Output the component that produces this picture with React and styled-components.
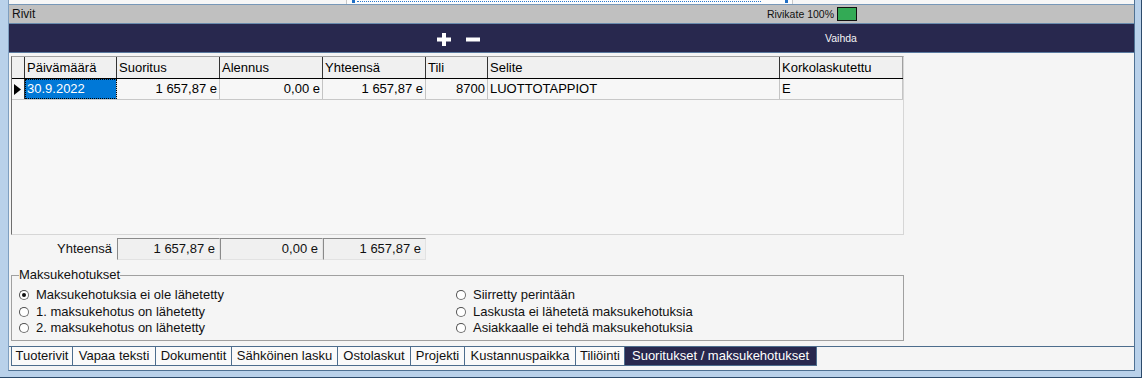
import React from 'react';
import styled, { createGlobalStyle } from 'styled-components';

const Global = createGlobalStyle`
  html, body { margin: 0; padding: 0; background: #b9d1ea; }
  body { font-family: "Liberation Sans", Arial, sans-serif; color: #000; }
  * { box-sizing: border-box; }
`;

const Frame = styled.div`
  width: 1142px;
  height: 378px;
  background: #b9d1ea;
  padding: 0 6px 6px 8px;
  border-right: 1px solid #2c4a6b;
  border-bottom: 1px solid #2c4a6b;
  display: flex;
`;

const Panel = styled.div`
  flex: 1;
  display: flex;
  flex-direction: column;
  background: #f5f5f5;
  border-left: 1px solid #7f9fc0;
  border-right: 1px solid #4f7193;
  border-bottom: 1px solid #4f7193;
`;

const TopStrip = styled.div`
  height: 5px;
  background: #f7f7f7;
  border-bottom: 1px solid #7898b8;
  padding-left: 337px;
`;

const ScrollBox = styled.div`
  width: 447px;
  height: 4px;
  background: #fdfdfd;
  border-left: 1px solid #c8c8c8;
  border-right: 1px solid #c8c8c8;
  display: flex;
  align-items: flex-start;
  padding: 0 4px 0 5px;
  gap: 2px;
`;

const Mark = styled.div`
  width: 3px;
  height: 3px;
  background: #1f6fc5;
  flex: none;
`;

const Dotted = styled.div`
  flex: 1;
  margin-top: 1px;
  border-top: 1px dotted #2a78cc;
  margin-right: 22px;
`;

const TitleBar = styled.div`
  height: 19px;
  background: #c0c0c0;
  border-bottom: 1px solid #6a8cae;
  display: flex;
  align-items: center;
  padding: 0 277px 0 3px;
  font-size: 12px;
`;

const Title = styled.span`
  color: #111;
`;

const Coverage = styled.div`
  margin-left: auto;
  display: flex;
  align-items: center;
  gap: 3px;
  font-size: 10.5px;
  color: #111;
`;

const Swatch = styled.div`
  width: 20px;
  height: 14px;
  background: #33aa55;
  border: 1px solid #111;
`;

const NavBar = styled.div`
  height: 29px;
  background: #28284e;
  border-bottom: 1px solid #5a7aa0;
  display: flex;
  align-items: center;
  padding-left: 428px;
  color: #fff;
`;

const IconBtn = styled.div`
  display: flex;
  align-items: center;
  margin-top: 3px;
  margin-right: ${p => p.$gap}px;
`;

const NavLabel = styled.span`
  font-size: 10.5px;
  color: #f4f4f4;
`;

const Content = styled.div`
  padding: 3px 0 0 2px;
  display: flex;
  flex-direction: column;
`;

const Grid = styled.div`
  width: 893px;
  height: 179px;
  background: #f7f7f7;
  border-top: 1px solid #a0a0a0;
  border-left: 1px solid #6e6e6e;
  border-right: 1px solid #d6d6d6;
  border-bottom: 1px solid #d6d6d6;
`;

const cols = '13px 92px 103px 103px 103px 62px 292px 123px';

const Row = styled.div`
  display: grid;
  grid-template-columns: ${cols};
  height: ${p => (p.$head ? 22 : 21)}px;
  border-bottom: 1px solid ${p => (p.$head ? '#000' : '#c8c8c8')};
  background: ${p => (p.$head ? '#f0f0f0' : '#f7f7f7')};
`;

const Cell = styled.div`
  font-size: 13px;
  line-height: ${p => (p.$head ? 21 : 20)}px;
  padding: 0 2px 0 2px;
  white-space: nowrap;
  overflow: hidden;
  text-align: ${p => (p.$right ? 'right' : 'left')};
  border-right: 1px solid ${p => (p.$head ? (p.$last ? '#a0a0a0' : '#333') : '#c4c4c4')};
  background: ${p => (p.$sel ? '#0078d7' : 'transparent')};
  color: ${p => (p.$sel ? '#fff' : '#000')};
  outline: ${p => (p.$sel ? '1px dotted #000' : 'none')};
  outline-offset: -1px;
`;

const Selector = styled.div`
  display: flex;
  align-items: center;
  justify-content: flex-start;
  padding-left: 2px;
  border-right: 1px solid #333;
`;

const Totals = styled.div`
  display: flex;
  margin-top: 3px;
  height: 22px;
  font-size: 13px;
`;

const TotalLabel = styled.div`
  width: 106px;
  text-align: right;
  padding-right: 5px;
  line-height: 22px;
  color: #111;
`;

const TotalBox = styled.div`
  width: 103px;
  height: 22px;
  line-height: 20px;
  text-align: right;
  padding-right: 4px;
  background: #f0f0f0;
  border: 1px solid;
  border-color: #8a8a8a #e2e2e2 #e2e2e2 #8a8a8a;
  color: #111;
`;

const Fieldset = styled.fieldset`
  width: 893px;
  margin: 8px 0 0 0;
  padding: 5px 0 3px 7px;
  border: 1px solid #a0a0a0;
  display: grid;
  grid-template-columns: 437px 1fr;
  grid-template-rows: repeat(3, 16.5px);
  grid-auto-flow: column;
  font-size: 13px;
`;

const Legend = styled.legend`
  padding: 0;
  font-size: 13px;
  line-height: 14px;
  color: #111;
`;

const RadioItem = styled.label`
  display: flex;
  align-items: center;
  gap: 7px;
  color: #111;
  line-height: 16px;
`;

const RadioDot = styled.span`
  width: 10px;
  height: 10px;
  border-radius: 50%;
  border: 1px solid #707070;
  border-top-color: #505050;
  border-left-color: #505050;
  background: #fff;
  display: flex;
  align-items: center;
  justify-content: center;
  flex: none;
  &::after {
    content: '';
    width: 4px;
    height: 4px;
    border-radius: 50%;
    background: ${p => (p.$on ? '#111' : 'transparent')};
  }
`;

const TabStrip = styled.div`
  margin-top: 5px;
  border-top: 1px solid #4d6d8d;
  padding-left: 2px;
  display: flex;
`;

const TabRow = styled.div`
  display: flex;
  border-left: 1px solid #4d6d8d;
`;

const Tab = styled.div`
  width: ${p => p.$w}px;
  height: 19px;
  border-right: 1px solid #4d6d8d;
  border-bottom: 1px solid #4d6d8d;
  background: ${p => (p.$active ? '#28284e' : '#fafafa')};
  color: ${p => (p.$active ? '#fff' : '#111')};
  font-size: 13px;
  line-height: 18px;
  text-align: center;
  white-space: nowrap;
`;

const headers = ['Päivämäärä', 'Suoritus', 'Alennus', 'Yhteensä', 'Tili', 'Selite', 'Korkolaskutettu'];

const tabs = [
  ['Tuoterivit', 61],
  ['Vapaa teksti', 83],
  ['Dokumentit', 76],
  ['Sähköinen lasku', 106],
  ['Ostolaskut', 73],
  ['Projekti', 54],
  ['Kustannuspaikka', 111],
  ['Tiliöinti', 49],
  ['Suoritukset / maksukehotukset', 192],
];

const radios = [
  ['Maksukehotuksia ei ole lähetetty', true],
  ['1. maksukehotus on lähetetty', false],
  ['2. maksukehotus on lähetetty', false],
  ['Siirretty perintään', false],
  ['Laskusta ei lähetetä maksukehotuksia', false],
  ['Asiakkaalle ei tehdä maksukehotuksia', false],
];

export default function App() {
  return (
    <>
      <Global />
      <Frame>
        <Panel>
          <TopStrip>
            <ScrollBox>
              <Mark />
              <Dotted />
              <Mark />
            </ScrollBox>
          </TopStrip>
          <TitleBar>
            <Title>Rivit</Title>
            <Coverage>
              <span>Rivikate 100%</span>
              <Swatch />
            </Coverage>
          </TitleBar>
          <NavBar>
            <IconBtn $gap={15}>
              <svg width="14" height="13" viewBox="0 0 14 13">
                <rect x="0" y="4.5" width="14" height="4" fill="#fff" />
                <rect x="5" y="0" width="4" height="13" fill="#fff" />
              </svg>
            </IconBtn>
            <IconBtn $gap={345}>
              <svg width="14" height="13" viewBox="0 0 14 13">
                <rect x="0" y="4.5" width="14" height="4" fill="#fff" />
              </svg>
            </IconBtn>
            <NavLabel>Vaihda</NavLabel>
          </NavBar>
          <Content>
            <Grid>
              <Row $head>
                <Selector />
                {headers.map((h, i) => (
                  <Cell key={h} $head $last={i === headers.length - 1}>
                    {h}
                  </Cell>
                ))}
              </Row>
              <Row>
                <Selector>
                  <svg width="7" height="11" viewBox="0 0 7 11">
                    <polygon points="0,0 7,5.5 0,11" fill="#000" />
                  </svg>
                </Selector>
                <Cell $sel>30.9.2022</Cell>
                <Cell $right>1 657,87 e</Cell>
                <Cell $right>0,00 e</Cell>
                <Cell $right>1 657,87 e</Cell>
                <Cell $right>8700</Cell>
                <Cell>LUOTTOTAPPIOT</Cell>
                <Cell>E</Cell>
              </Row>
            </Grid>
            <Totals>
              <TotalLabel>Yhteensä</TotalLabel>
              <TotalBox>1 657,87 e</TotalBox>
              <TotalBox>0,00 e</TotalBox>
              <TotalBox>1 657,87 e</TotalBox>
            </Totals>
            <Fieldset>
              <Legend>Maksukehotukset</Legend>
              {radios.map(([label, on]) => (
                <RadioItem key={label}>
                  <RadioDot $on={on} />
                  {label}
                </RadioItem>
              ))}
            </Fieldset>
          </Content>
          <TabStrip>
            <TabRow>
              {tabs.map(([t, w], i) => (
                <Tab key={t} $w={w} $active={i === tabs.length - 1}>
                  {t}
                </Tab>
              ))}
            </TabRow>
          </TabStrip>
        </Panel>
      </Frame>
    </>
  );
}
